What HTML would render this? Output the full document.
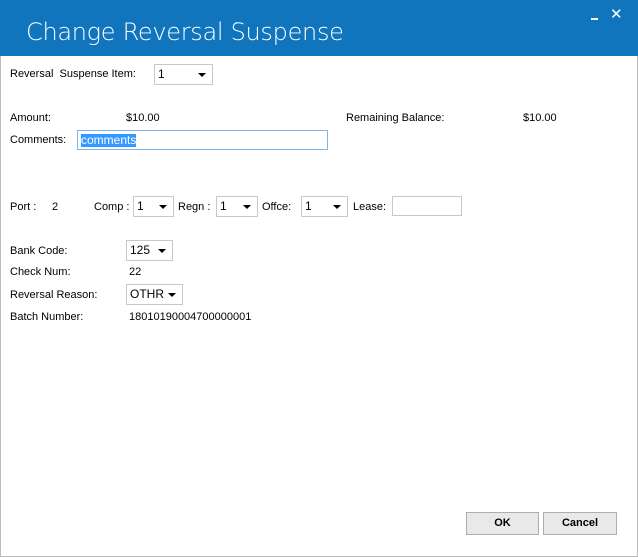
<!DOCTYPE html><html><head><style>
body{margin:0;width:638px;height:557px;position:relative;overflow:hidden;background:#fff;font-family:"Liberation Sans",sans-serif;font-size:11px;color:#000}
.a{position:absolute;white-space:nowrap}
.tb{position:absolute;left:0;top:0;width:638px;height:56px;background:#1175bd}
.sel{position:absolute;border:1px solid #c8c8c8;background:#fff;height:20px;box-sizing:border-box;font-size:12px;line-height:18px;padding-left:3px}
.sel:after{content:"";position:absolute;right:6px;top:8px;border-left:4px solid transparent;border-right:4px solid transparent;border-top:4px solid #000}
.btn{position:absolute;top:512px;height:23px;background:#e9e9e9;border:1px solid #adadad;box-sizing:border-box;font-weight:bold;text-align:center;line-height:21px;font-size:11px}
</style></head><body>
<div class="tb"></div>
<div class="a" style="left:26px;top:18px;font-size:24px;color:#fff;font-family:'DejaVu Sans',sans-serif;font-weight:200;letter-spacing:-0.3px">Change Reversal Suspense</div>
<div class="a" style="left:591px;top:18px;width:7px;height:2px;background:#fff"></div>
<div class="a" style="left:610px;top:5px;color:#fff;font-size:15px">✕</div>
<div class="a" style="left:0;top:56px;width:1px;height:501px;background:#bbb"></div>
<div class="a" style="left:637px;top:56px;width:1px;height:501px;background:#bbb"></div>
<div class="a" style="left:0;top:556px;width:638px;height:1px;background:#bbb"></div>
<div class="a" style="left:10px;top:68px">Reversal&nbsp; Suspense Item:</div>
<div class="sel" style="left:154px;top:64px;width:59px;height:21px">1</div>
<div class="a" style="left:10px;top:112px">Amount:</div>
<div class="a" style="left:126px;top:112px">$10.00</div>
<div class="a" style="left:346px;top:112px">Remaining Balance:</div>
<div class="a" style="left:523px;top:112px">$10.00</div>
<div class="a" style="left:10px;top:134px">Comments:</div>
<div class="a" style="left:77px;top:130px;width:251px;height:20px;border:1px solid #7eb4ea;box-sizing:border-box"><span style="position:absolute;left:3px;top:3px;background:#3399ff;color:#fff;font-size:12px;line-height:13px">comments</span></div>
<div class="a" style="left:10px;top:201px">Port :</div>
<div class="a" style="left:52px;top:201px">2</div>
<div class="a" style="left:94px;top:201px">Comp :</div>
<div class="sel" style="left:133px;top:196px;width:41px;height:21px">1</div>
<div class="a" style="left:178px;top:201px">Regn :</div>
<div class="sel" style="left:216px;top:196px;width:42px;height:21px">1</div>
<div class="a" style="left:262px;top:201px">Offce:</div>
<div class="sel" style="left:301px;top:196px;width:47px;height:21px">1</div>
<div class="a" style="left:353px;top:201px">Lease:</div>
<div class="a" style="left:392px;top:196px;width:70px;height:20px;border:1px solid #c8c8c8;box-sizing:border-box"></div>
<div class="a" style="left:10px;top:245px">Bank Code:</div>
<div class="sel" style="left:126px;top:240px;width:47px;height:21px">125</div>
<div class="a" style="left:10px;top:266px">Check Num:</div>
<div class="a" style="left:129px;top:266px">22</div>
<div class="a" style="left:10px;top:289px">Reversal Reason:</div>
<div class="sel" style="left:126px;top:284px;width:57px;height:21px">OTHR</div>
<div class="a" style="left:10px;top:311px">Batch Number:</div>
<div class="a" style="left:129px;top:311px">18010190004700000001</div>
<div class="btn" style="left:466px;width:73px">OK</div>
<div class="btn" style="left:543px;width:74px">Cancel</div>
</body></html>
